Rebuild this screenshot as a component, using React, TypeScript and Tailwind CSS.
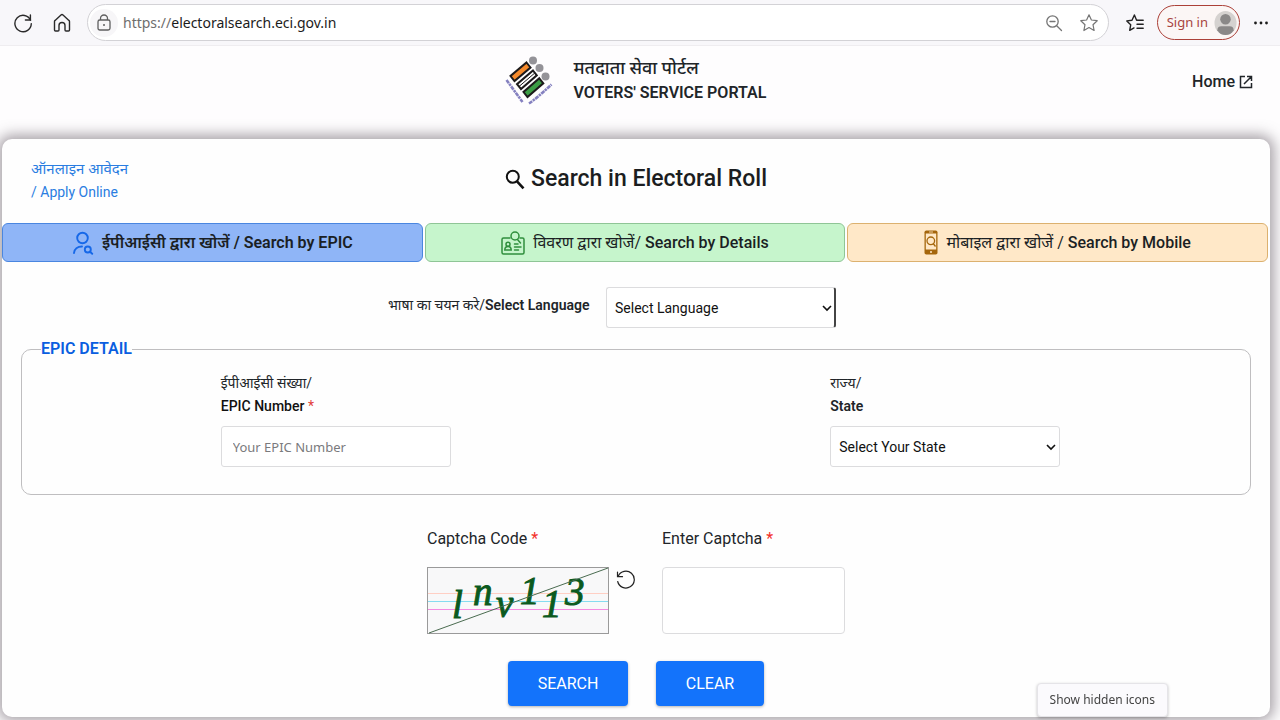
import { useState, type ReactNode } from "react";

const HINDI = "font-['Roboto','Noto_Sans_Devanagari','Noto_Sans',sans-serif]";

function ReloadIcon() {
  return (
    <svg width="20" height="20" viewBox="0 0 20 20" fill="none" stroke="#2a2a2a" strokeWidth="1.4" strokeLinecap="round" strokeLinejoin="round">
      <path d="M17.6 7.200A8.200 8.200 0 1 0 18.300 10.600" />
      <path d="M17.4 2v5h-5" />
    </svg>
  );
}

function HomeIcon() {
  return (
    <svg width="18" height="20" viewBox="0 0 18 20" fill="none" stroke="#2a2a2a" strokeWidth="1.4" strokeLinejoin="round">
      <path d="M1.500 8.600c0-.5.2-.9.6-1.200L8 2a1.500 1.500 0 0 1 2 0l5.900 5.400c.4.3.6.7.6 1.200v8.400c0 .6-.4 1-1 1h-2.500c-.6 0-1-.4-1-1v-4.500a3 3 0 0 0-6 0v4.500c0 .6-.4 1-1 1H2.500c-.6 0-1-.4-1-1z" />
    </svg>
  );
}

function LockIcon() {
  return (
    <svg width="16" height="18" viewBox="0 0 16 18" fill="none" stroke="#5f5f5f" strokeWidth="1.300">
      <rect x="2" y="6" width="12" height="10" rx="1.800" />
      <path d="M4.500 6V4.500a3.500 3.500 0 0 1 7 0V6" />
      <circle cx="8" cy="11" r="1" fill="#5f5f5f" stroke="none" />
    </svg>
  );
}

function ZoomOutIcon() {
  return (
    <svg width="18" height="18" viewBox="0 0 18 18" fill="none" stroke="#757575" strokeWidth="1.300" strokeLinecap="round">
      <circle cx="7.500" cy="7.500" r="5.700" />
      <path d="M11.700 11.700l4.800 4.800M5 7.500h5" />
    </svg>
  );
}

function StarIcon() {
  return (
    <svg width="20" height="20" viewBox="0 0 20 20" fill="none" stroke="#757575" strokeWidth="1.200" strokeLinejoin="round">
      <path d="M10 1.800l2.400 5.200 5.800.7-4.200 4 1.100 5.800L10 14.600l-5.100 2.900L6 11.700l-4.200-4L7.600 7z" />
    </svg>
  );
}

function FavoritesIcon() {
  return (
    <svg width="20" height="20" viewBox="0 0 20 20" fill="none" stroke="#222" strokeWidth="1.400" strokeLinejoin="round" strokeLinecap="round">
      <path d="M12.500 7.200h-.9L9.400 2 7 7.200l-5.200.7 3.900 3.900-1 5.600 4.300-2.500" />
      <path d="M13 7.200h5.200M12 11.200h6.200M12 15.200h6.200" />
    </svg>
  );
}

function PortalLogo() {
  return (
    <svg width="48" height="50" viewBox="0 0 48 50" aria-hidden="true">
      <circle cx="28" cy="4.500" r="4" fill="#949398" />
      <circle cx="34.500" cy="12" r="4" fill="#949398" />
      <circle cx="40.500" cy="20.500" r="4" fill="#949398" />
      <g stroke="#1c1a1b" strokeWidth="2">
        <path d="M21.500 6.500l4 5L9.500 25 5.500 20z" fill="#f58a2c" />
        <path d="M28 14.500l3.800 4.800L16 33l-4-4.800z" fill="#fff" />
        <path d="M34.300 22.300l4 5L22.500 41l-4-5z" fill="#3c9d45" />
        <path d="M29.800 17L14 30.500" strokeWidth="1" />
      </g>
      <path d="M1.500 24L17.500 46" stroke="#8581c0" strokeWidth="2.600" strokeDasharray="4 .7 2.500 .7" />
      <path d="M24 47.500Q31 43 46.500 28.500" fill="none" stroke="#8581c0" strokeWidth="2.600" strokeDasharray="4 .7 2.500 .7" />
    </svg>
  );
}

function OpenIcon() {
  return (
    <svg width="14" height="14" viewBox="0 0 14 14" fill="none" stroke="#212529" strokeWidth="1.500">
      <path d="M6 1.500H1.500v11h11V8M8 1.500h4.500V6M12.500 1.500L5 9" />
    </svg>
  );
}

function SearchIcon() {
  return (
    <svg width="20" height="21" viewBox="0 0 20 21" fill="none" stroke="#111" strokeWidth="2">
      <circle cx="7.800" cy="7.800" r="6" />
      <path d="M12 12.300l6.500 7" strokeWidth="2.600" />
    </svg>
  );
}

function PersonSearchIcon() {
  return (
    <svg width="22" height="24" viewBox="0 0 22 24" fill="none" stroke="#1668e8" strokeWidth="1.900" strokeLinecap="round">
      <circle cx="10.500" cy="7" r="5.300" />
      <path d="M2 22c.3-4 3.600-6.500 8-6.500" />
      <circle cx="15.800" cy="18.500" r="3" />
      <path d="M18 20.800l2.200 2" />
    </svg>
  );
}

function CardSearchIcon() {
  return (
    <svg width="24" height="24" viewBox="0 0 24 24" fill="none" stroke="#2f8f3c" strokeWidth="1.500" strokeLinecap="round">
      <path d="M9 7H2.500A1.500 1.500 0 0 0 1 8.500v13A1.500 1.500 0 0 0 2.500 23h19a1.500 1.500 0 0 0 1.500-1.500v-13A1.500 1.500 0 0 0 21.500 7H19" />
      <circle cx="14" cy="5" r="4" />
      <path d="M16.500 8.500l3 3.500" />
      <circle cx="7" cy="13.200" r="2" />
      <path d="M3.800 19c0-2.300 1.300-3.500 3.200-3.500s3.200 1.200 3.200 3.500zM13.500 13h3.500M13.500 16h6.500M13.500 19h4" />
    </svg>
  );
}

function PhoneSearchIcon() {
  return (
    <svg width="14" height="25" viewBox="0 0 14 25">
      <rect x=".5" y=".5" width="13" height="24" rx="1.800" fill="#a5660c" />
      <rect x="1.800" y="3.500" width="10.400" height="16" fill="#ffe8c8" />
      <circle cx="6.800" cy="10.800" r="3.800" fill="none" stroke="#a5660c" strokeWidth="1.300" />
      <path d="M9.200 13.500l2.300 3" stroke="#a5660c" strokeWidth="1.300" />
      <path d="M5 2h4" stroke="#ffe8c8" strokeWidth=".8" />
      <circle cx="7" cy="22" r="1" fill="#ffe8c8" />
    </svg>
  );
}

function RefreshIcon() {
  return (
    <svg width="20" height="20" viewBox="0 0 20 20" fill="none" stroke="#222" strokeWidth="1.200" strokeLinecap="round">
      <path d="M2.200 6.200A8.400 8.400 0 1 1 1.700 11.500" />
      <path d="M1.500 2v4.700h5" />
    </svg>
  );
}

function CaptchaPicture() {
  return (
    <svg width="182" height="67" viewBox="0 0 182 67" role="img" aria-label="Captcha code">
      <rect x=".5" y=".5" width="181" height="66" fill="#f8f8f9" stroke="#9a9a9a" />
      <rect x="1" y="26" width="180" height="1" fill="#ffcfc4" />
      <rect x="1" y="34" width="180" height="1" fill="#86dcf0" />
      <rect x="1" y="42" width="180" height="1" fill="#f58ae2" />
      <g className="font-['Liberation_Serif',serif] italic" fill="#0b5a1e" fontSize="39" stroke="#0b5a1e" strokeWidth="1">
        <text x="25" y="51">l</text>
        <text x="46" y="38">n</text>
        <text x="69" y="50">v</text>
        <text x="93" y="37">1</text>
        <text x="115" y="50">1</text>
        <text x="138" y="38">3</text>
      </g>
      <path d="M2 66L181 1" stroke="#4a6b50" />
    </svg>
  );
}

function Chevron() {
  return (
    <svg className="pointer-events-none col-start-1 row-start-1 mr-1 self-center justify-self-end" width="10" height="8" viewBox="0 0 10 8" fill="none" stroke="#111" strokeWidth="1.600">
      <path d="M1 2l4 4 4-4" />
    </svg>
  );
}

function Dropdown({ id, label, className }: { id: string; label: string; className: string }) {
  return (
    <div className="grid">
      <select id={id} className={`col-start-1 row-start-1 h-[41px] w-[230px] appearance-none rounded-[3px] border border-[#dcdcde] bg-white px-2 text-sm text-[#111] ${className}`}>
        <option>{label}</option>
      </select>
      <Chevron />
    </div>
  );
}

function Tab({ icon, hindi, english, className, active }: { icon: ReactNode; hindi: string; english: string; className: string; active?: boolean }) {
  return (
    <button type="button" role="tab" aria-selected={!!active} className={`flex h-[39px] items-center justify-center gap-2 rounded-md border text-base text-[#1b1f24] ${className}`}>
      {icon}
      <span>
        <span className={active ? "font-semibold" : "font-normal"}>{hindi}</span>{" "}
        <span className={active ? "font-semibold" : "font-medium"}>{english}</span>
      </span>
    </button>
  );
}

export default function App() {
  const [epic, setEpic] = useState("");
  const [captcha, setCaptcha] = useState("");

  return (
    <div className={`flex min-h-screen flex-col bg-[#fefdfe] text-[#212529] ${HINDI}`}>
      <header className="flex h-[46px] items-center border-b border-[#efedf0] bg-[#f8f7fa] pr-[11px] pl-[13px] font-['Noto_Sans',sans-serif]">
        <button type="button" aria-label="Reload"><ReloadIcon /></button>
        <button type="button" aria-label="Home page" className="ml-5"><HomeIcon /></button>
        <div className="ml-4 flex h-[37px] flex-1 items-center rounded-full border border-[#d3d2d6] bg-white pr-[9px] pl-[2px]">
          <span className="flex size-7 items-center justify-center rounded-full bg-[#f7f6f8]"><LockIcon /></span>
          <button type="button" className="ml-[5px] flex-1 truncate text-left text-sm text-[#1b1b1b]">
            <span className="text-[#6e6e6e]">https://</span>electoralsearch.eci.gov.in
          </button>
          <button type="button" aria-label="Zoom out"><ZoomOutIcon /></button>
          <button type="button" aria-label="Add to favorites" className="ml-4"><StarIcon /></button>
        </div>
        <button type="button" aria-label="Favorites" className="ml-4"><FavoritesIcon /></button>
        <button type="button" className="ml-3 flex h-[35px] items-center gap-1.5 rounded-full border border-[#ab4038] bg-[#fbf6f5] pr-[2px] pl-[9px] text-[13px] text-[#a8443f]">
          Sign in
          <svg width="23" height="26" viewBox="0 0 24 26">
            <ellipse cx="12" cy="13" rx="11.500" ry="12.500" fill="#d5d2d0" />
            <circle cx="12" cy="9" r="5.500" fill="#8a8888" />
            <path d="M3.500 20.500c0-3 2-4 4-4h9c2 0 4 1 4 4-2 3.500-5 5-8.500 5s-6.500-1.500-8.500-5z" fill="#8a8888" />
          </svg>
        </button>
        <button type="button" aria-label="Settings and more" className="ml-[13px]">
          <svg width="16" height="4" viewBox="0 0 16 4" fill="#1b1b1b"><circle cx="2.500" cy="2" r="1.400" /><circle cx="8" cy="2" r="1.400" /><circle cx="13.500" cy="2" r="1.400" /></svg>
        </button>
      </header>

      <div className="grid grid-cols-[1fr_auto_1fr] items-center pt-[9px] pr-[27px] pb-[33px] pl-[18px]">
        <div />
        <div className="flex items-center gap-[21px]">
          <PortalLogo />
          <div className="text-base leading-[26px] font-semibold">
            <p className="text-[18px] leading-[25px] font-medium">मतदाता सेवा पोर्टल</p>
            <p>VOTERS' SERVICE PORTAL</p>
          </div>
        </div>
        <a href="#home" className="flex items-center gap-1 justify-self-end pt-[2px] text-base font-medium">Home <OpenIcon /></a>
      </div>

      <main className="mr-[10px] mb-[3px] ml-[2px] rounded-[10px] bg-[#fefefe] shadow-[0_0_14px_4px_rgba(80,70,80,0.500)]">
        <div className="grid grid-cols-[1fr_auto_1fr] pt-[19px] pb-[19px]">
          <a href="#apply" className="pl-[29px] text-sm leading-[23px] text-[#2a7de1]">
            <span className="text-[15px]">ऑनलाइन आवेदन</span><br />/ Apply Online
          </a>
          <h1 className="flex items-center gap-[6px] self-start pt-1 text-[23px] font-medium text-[#1b1d20]"><SearchIcon />Search in Electoral Roll</h1>
        </div>

        <div role="tablist" className="grid grid-cols-3 gap-[2px] pr-[2px]">
          <Tab active icon={<PersonSearchIcon />} hindi="ईपीआईसी द्वारा खोजें /" english="Search by EPIC" className="border-[#4a86e0] bg-[#8fb5f7]" />
          <Tab icon={<CardSearchIcon />} hindi="विवरण द्वारा खोजें/" english="Search by Details" className="border-[#8fc596] bg-[#c6f5cc]" />
          <Tab icon={<PhoneSearchIcon />} hindi="मोबाइल द्वारा खोजें /" english="Search by Mobile" className="border-[#dcb16f] bg-[#ffe8c8]" />
        </div>

        <div className="mt-[25px] flex items-center gap-[18px] pl-[386px]">
          <label htmlFor="language" className="w-[200px] pb-[6px] text-right text-sm whitespace-nowrap">भाषा का चयन करे/<span className="font-semibold">Select Language</span></label>
          <Dropdown id="language" label="Select Language" className="border-r-2 border-r-[#444]" />
        </div>

        <fieldset className="mx-[19px] mt-[9px] h-[158px] rounded-[10px] border border-[#bfbec0]">
          <legend className="ml-[19px] text-base font-semibold text-[#0a5ee0]">EPIC DETAIL</legend>
          <div className="grid grid-cols-2 pt-[11px] pl-[9px]">
            <div className="mx-auto w-[230px]">
              <label htmlFor="epic" className="block text-sm leading-[23px]">ईपीआईसी संख्या/<br /><span className="font-medium text-[#111]">EPIC Number</span> <span className="text-[#e2403a]">*</span></label>
              <input id="epic" value={epic} onChange={(e) => setEpic(e.target.value)} placeholder="Your EPIC Number" className="mt-2 h-[41px] w-full rounded-[3px] border border-[#dcdcde] bg-white px-[11px] font-['Noto_Sans',sans-serif] text-[13px] placeholder:text-[#7a7a7d]" />
            </div>
            <div className="mx-auto w-[230px]">
              <label htmlFor="state" className="mb-2 block text-sm leading-[23px]">राज्य/<br /><span className="font-semibold">State</span></label>
              <Dropdown id="state" label="Select Your State" className="" />
            </div>
          </div>
        </fieldset>

        <form onSubmit={(e) => e.preventDefault()}>
          <div className="mt-8 flex justify-center gap-[26px] text-base">
            <div>
              <p>Captcha Code <span className="text-[#f3302b]">*</span></p>
              <div className="mt-4 flex items-start gap-[7px]">
                <CaptchaPicture />
                <button type="button" aria-label="Refresh captcha" className="mt-[3px]"><RefreshIcon /></button>
              </div>
            </div>
            <div>
              <label htmlFor="captcha">Enter Captcha <span className="text-[#f3302b]">*</span></label>
              <input id="captcha" value={captcha} onChange={(e) => setCaptcha(e.target.value)} className="mt-4 block h-[67px] w-[183px] rounded border border-[#dcdcde] bg-white px-3" />
            </div>
          </div>
          <div className="mt-[27px] flex justify-center gap-7 pb-[11px] text-base text-white">
            <button type="submit" className="h-[45px] w-[120px] rounded bg-[#1373fb] shadow-[0_1px_3px_rgba(0,0,0,0.300)]">SEARCH</button>
            <button type="button" onClick={() => { setEpic(""); setCaptcha(""); }} className="h-[45px] w-[108px] rounded bg-[#1373fb] shadow-[0_1px_3px_rgba(0,0,0,0.300)]">CLEAR</button>
          </div>
        </form>
      </main>

      <div role="tooltip" className="fixed right-28 bottom-[3px] rounded border border-[#e5e4e8] bg-[#fbfafd] px-3 py-2 font-['Noto_Sans',sans-serif] text-xs text-[#444] shadow-[0_1px_3px_rgba(0,0,0,0.250)]">Show hidden icons</div>
    </div>
  );
}
